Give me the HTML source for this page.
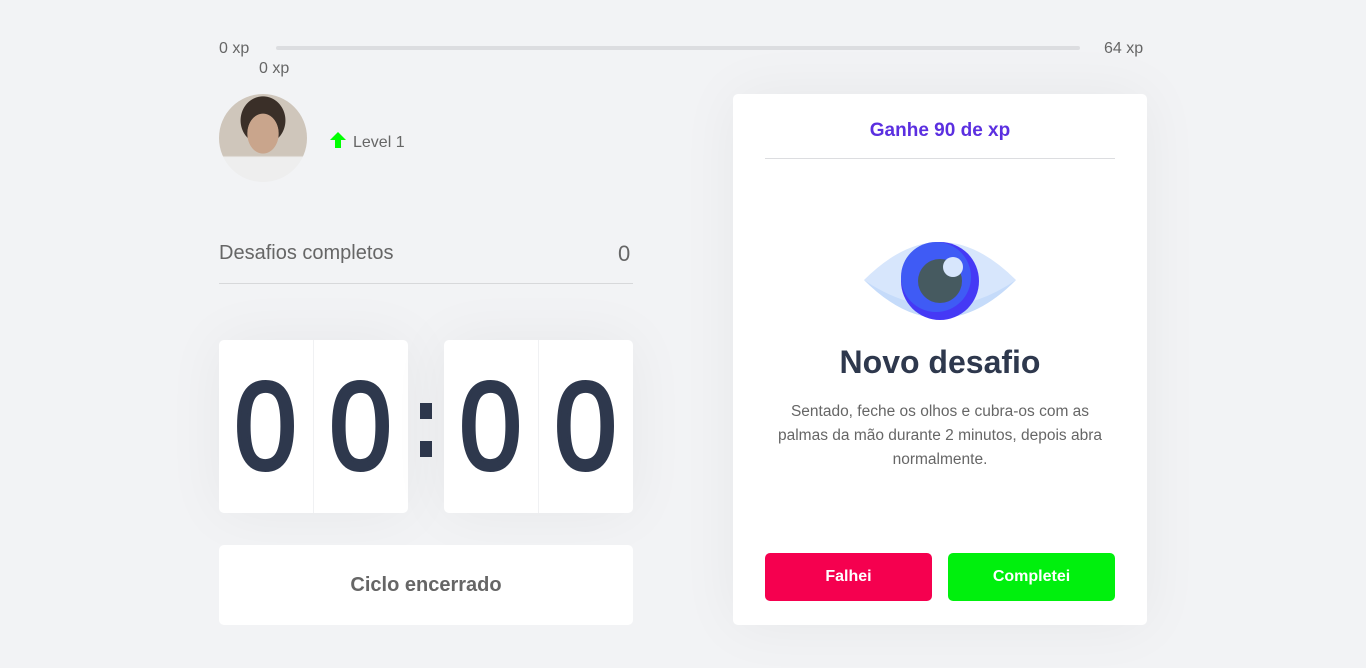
<!DOCTYPE html>
<html><head><style>
*{margin:0;padding:0;box-sizing:border-box}
body{width:1366px;height:668px;background:#f2f3f5;font-family:"Liberation Sans",sans-serif;color:#666;position:relative;overflow:hidden}
.a{position:absolute}
.bar{left:276px;top:46px;width:804px;height:4px;background:#dcdde0;border-radius:4px}
.digits{top:340px;height:173px;display:flex;background:#fff;border-radius:5px;box-shadow:0 0 60px rgba(0,0,0,.05)}
.digits span{width:94.5px;height:173px;display:flex;align-items:center;justify-content:center;font-size:124px;color:#2e384d;font-weight:400}
.digits span i{font-style:normal;display:inline-block;transform:scaleX(0.9);-webkit-text-stroke:4px #2e384d}
.digits span:first-child{border-right:1px solid #f0f1f3}
</style></head><body>
<div class="a" style="left:219px;top:40px;font-size:16px">0 xp</div>
<div class="bar a"></div>
<div class="a" style="left:1104px;top:40px;font-size:16px">64 xp</div>
<div class="a" style="left:259px;top:60px;font-size:16px">0 xp</div>
<div class="a" style="left:219px;top:94px;width:88px;height:88px;border-radius:50%;background:radial-gradient(ellipse 22% 28% at 50% 45%,#c9a58c 0 80%,transparent 82%),radial-gradient(ellipse 28% 30% at 50% 30%,#3a2f28 0 90%,transparent 92%),linear-gradient(#cfc6bb 0 70%,#eeeeee 72%);overflow:hidden"></div>
<svg class="a" style="left:330px;top:132px" width="16" height="16" viewBox="0 0 16 16"><path d="M8 0L16 8H11V16H5V8H0Z" fill="#0f0"/></svg>
<div class="a" style="left:353px;top:134px;font-size:16px">Level 1</div>
<div class="a" style="left:219px;top:242px;font-size:20px;color:#666">Desafios completos</div>
<div class="a" style="left:618px;top:241px;font-size:22px;color:#666">0</div>
<div class="a" style="left:219px;top:283px;width:414px;height:1px;background:#d7d8da"></div>
<div class="a digits" style="left:219px"><span><i>0</i></span><span><i>0</i></span></div>
<div class="a" style="left:420px;top:403px;width:12px;height:16px;background:#2e384d"></div>
<div class="a" style="left:420px;top:441px;width:12px;height:16px;background:#2e384d"></div>
<div class="a digits" style="left:444px"><span><i>0</i></span><span><i>0</i></span></div>
<div class="a" style="left:219px;top:545px;width:414px;height:80px;background:#fff;border-radius:5px;display:flex;align-items:center;justify-content:center;font-size:20px;font-weight:600;color:#666">Ciclo encerrado</div>
<div class="a" style="left:733px;top:94px;width:414px;height:531px;background:#fff;border-radius:5px;box-shadow:0 0 60px rgba(0,0,0,.05)">
<div class="a" style="left:0;top:26px;width:414px;text-align:center;font-size:19px;font-weight:700;color:#5b2fe0">Ganhe 90 de xp</div>
<div class="a" style="left:32px;top:64px;width:350px;height:1px;background:#dcdde0"></div>
<svg class="a" style="left:131px;top:148px" width="152" height="78" viewBox="0 0 152 78"><path d="M0 38Q76 -38 152 38Q76 114 0 38Z" fill="#d7e6fc"/><path d="M0 38Q76 114 152 38Q76 90 0 38Z" fill="#c5dbfa"/><circle cx="76" cy="39" r="39" fill="#4539f5"/><circle cx="72" cy="35" r="35" fill="#3f5bf5"/><circle cx="76" cy="39" r="22" fill="#465a60"/><circle cx="89" cy="25" r="10" fill="#d7e6fc"/></svg>
<div class="a" style="left:0;top:250px;width:414px;text-align:center;font-size:32px;font-weight:700;color:#2e384d">Novo desafio</div>
<div class="a" style="left:40px;top:306px;width:334px;text-align:center;font-size:15.5px;line-height:24px;color:#666">Sentado, feche os olhos e cubra-os com as palmas da mão durante 2 minutos, depois abra normalmente.</div>
<div class="a" style="left:32px;top:459px;width:167px;height:48px;background:#f5004f;border-radius:5px;color:#fff;font-weight:700;font-size:16px;display:flex;align-items:center;justify-content:center">Falhei</div>
<div class="a" style="left:215px;top:459px;width:167px;height:48px;background:#00f00d;border-radius:5px;color:#fff;font-weight:700;font-size:16px;display:flex;align-items:center;justify-content:center">Completei</div>
</div>
</body></html>
